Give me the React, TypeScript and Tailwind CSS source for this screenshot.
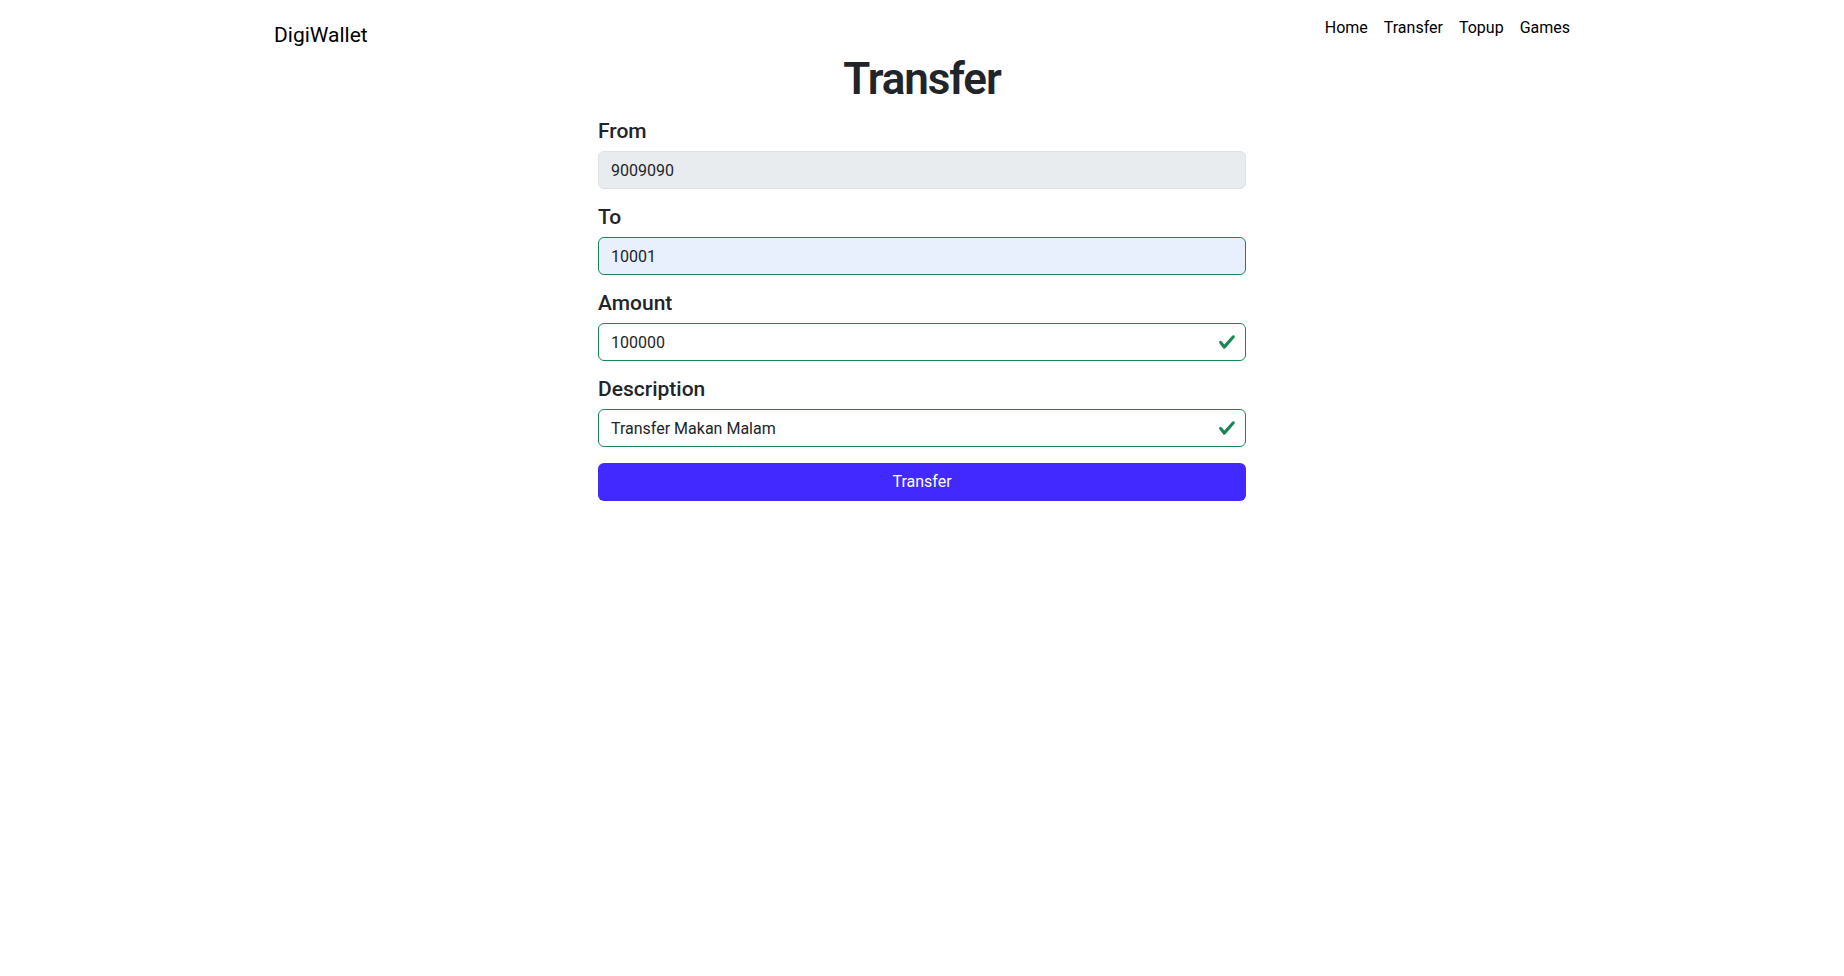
import React from 'react';

const CheckIcon = () => (
  <svg className="absolute right-[10px] top-1/2 -translate-y-1/2 w-[18px] h-[18px]" viewBox="0 0 8 8">
    <path fill="#198754" d="M2.3 6.73.6 4.53c-.4-1.04.46-1.4 1.1-.8l1.1 1.4 3.4-3.8c.6-.63 1.6-.27 1.2.7l-4 4.6c-.43.5-.8.4-1.1.1z" />
  </svg>
);

interface FieldProps {
  label: string;
  value: string;
  variant: 'disabled' | 'autofill' | 'valid';
}

const Field: React.FC<FieldProps> = ({ label, value, variant }) => {
  const inputClass =
    variant === 'disabled'
      ? 'bg-[#e9ecef] border-[#dee2e6]'
      : variant === 'autofill'
        ? 'bg-[#e8f0fe] border-[#198754]'
        : 'bg-white border-[#198754] pr-9';

  return (
    <div className="mb-4">
      <label className="block text-[21px] leading-6 font-medium text-[#212529] mb-2">{label}</label>
      <div className="relative">
        <input
          readOnly
          disabled={variant === 'disabled'}
          defaultValue={value}
          className={`block w-full h-[38px] px-3 border rounded-[6px] text-[16px] text-[#212529] outline-none ${inputClass}`}
        />
        {variant === 'valid' && <CheckIcon />}
      </div>
    </div>
  );
};

export default function App() {
  return (
    <div className="min-h-screen bg-white text-[#212529] font-['Roboto',sans-serif]">
      <div className="w-[1320px] mx-auto px-3">
        {/* Navbar */}
        <div className="flex justify-between items-start h-[55px]">
          <a className="pt-[20px] text-[21px] leading-[30px] text-black">DigiWallet</a>
          <ul className="flex pt-[16px] text-[16px] leading-6 text-black">
            {['Home', 'Transfer', 'Topup', 'Games'].map((item, i) => (
              <li key={item} className={i === 3 ? 'pl-2' : 'px-2'}>
                {item}
              </li>
            ))}
          </ul>
        </div>

        <h1 className="text-center text-[44px] leading-[48px] font-semibold tracking-tight mb-4">Transfer</h1>

        <form className="w-[648px] mx-auto">
          <Field label="From" value="9009090" variant="disabled" />
          <Field label="To" value="10001" variant="autofill" />
          <Field label="Amount" value="100000" variant="valid" />
          <Field label="Description" value="Transfer Makan Malam" variant="valid" />
          <button
            type="button"
            className="block w-full h-[38px] rounded-[6px] bg-[#4129ff] text-white text-[16px]"
          >
            Transfer
          </button>
        </form>
      </div>
    </div>
  );
}
